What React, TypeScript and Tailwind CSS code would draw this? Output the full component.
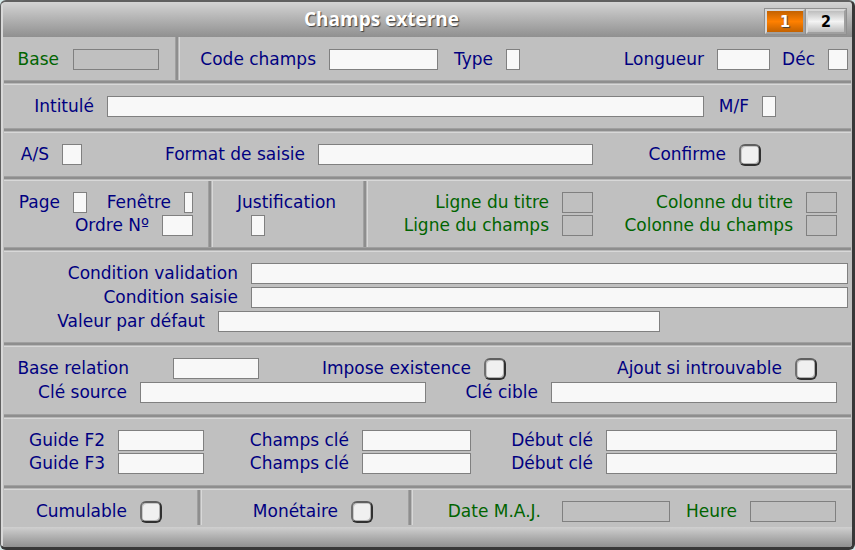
import { useState } from "react";
import type { ReactNode } from "react";
import clsx from "clsx";

type FieldProps = {
  label: string;
  // width of the whole field, label included
  className?: string;
  labelClass?: string;
  inputClass?: string;
  readOnly?: boolean;
};

function Field({ label, className, labelClass, inputClass, readOnly }: FieldProps) {
  return (
    <label
      className={clsx(
        "flex items-center justify-end gap-[13px] whitespace-nowrap",
        readOnly ? "text-[#006400]" : "text-[#000080]",
        className,
      )}
    >
      <span className={clsx("shrink-0 text-right", labelClass)}>{label}</span>
      <input
        type="text"
        readOnly={readOnly}
        className={clsx(
          "h-[21px] min-w-0 border border-[#808080] text-sm outline-none",
          readOnly ? "bg-transparent" : "bg-[#f8f8f8]",
          inputClass,
        )}
      />
    </label>
  );
}

function Check({ label, className }: { label: string; className?: string }) {
  return (
    <label className={clsx("flex h-[21px] items-center justify-end gap-[13px] whitespace-nowrap text-[#000080]", className)}>
      {label}
      <input
        type="checkbox"
        className="size-[22px] shrink-0 appearance-none rounded-md border-2 border-t-[#606060] border-r-[#303030] border-b-[#303030] border-l-[#707070] bg-[#f0f0f0] shadow-[inset_1px_1px_0_#c8c8c8,inset_-1px_-1px_0_#b0b0b0] checked:bg-[#808080]"
      />
    </label>
  );
}

function HLine() {
  return (
    <div className="mx-px">
      <div className="h-px bg-[#a0a0a0]" />
      <div className="h-0.5 bg-[#8e8e8e]" />
      <div className="h-px bg-[#b8b8b8]" />
      <div className="h-px bg-[#d8d8d8]" />
    </div>
  );
}

function VLine({ className = "-my-[11px]" }: { className?: string }) {
  return (
    <div className={clsx("flex shrink-0 self-stretch", className)}>
      <div className="w-px bg-[#a0a0a0]" />
      <div className="w-0.5 bg-[#8e8e8e]" />
      <div className="w-px bg-[#b8b8b8]" />
      <div className="w-px bg-[#d8d8d8]" />
    </div>
  );
}

function Row({ children, className }: { children: ReactNode; className?: string }) {
  return <div className={clsx("flex items-center", className)}>{children}</div>;
}

function Section({ children, className = "py-[11px]" }: { children: ReactNode; className?: string }) {
  return <section className={className}>{children}</section>;
}

export default function App() {
  const [page, setPage] = useState(1);

  return (
    <div className="bg-[#d4e8e8]">
      <form
        className="overflow-hidden rounded-md border-t-2 border-r-3 border-b-3 border-l border-t-[#606060] border-r-[#383838] border-b-[#383838] border-l-[#606060] bg-[#c0c0c0] text-[17px] leading-[21px]"
        style={{ fontFamily: 'Verdana, "DejaVu Sans", sans-serif' }}
      >
        <div className="border-l-2 border-[#d8d8d8]">
          <header className="flex h-[35px] items-center bg-linear-to-b from-[#d4d4d4] to-[#909090] pr-[5px]">
            <h1
              className="flex-1 pr-1 text-center text-[19px] font-bold text-white [text-shadow:1px_1px_1px_#404040]"
              style={{ fontFamily: 'Tahoma, "Open Sans", sans-serif' }}
            >
              Champs externe
            </h1>
            <nav className="mt-1.5 flex gap-px self-start border border-[#909090] bg-[#909090]">
              {[1, 2].map((n) => (
                <button
                  key={n}
                  type="button"
                  onClick={() => setPage(n)}
                  className={clsx(
                    "flex h-[25px] w-10 items-center justify-center border-2 border-t-[#d8d8d8] border-r-[#a0a0a0] border-b-[#a0a0a0] border-l-[#d8d8d8] bg-origin-border text-base font-bold",
                    page === n
                      ? "bg-linear-to-b from-[#b85c00] via-[#ff8000] to-[#b85c00] text-white [text-shadow:1px_1px_1px_#404040]"
                      : "bg-linear-to-b from-[#b4b4b4] via-[#f4f4f4] to-[#b4b4b4] text-black",
                  )}
                  style={{ fontFamily: 'Tahoma, "DejaVu Sans Condensed", sans-serif' }}
                >
                  {n}
                </button>
              ))}
            </nav>
          </header>

          <Section className="pt-3 pb-2.5">
            <Row className="pr-1">
              <Field label="Base" className="w-[156px]" labelClass="mr-px" inputClass="w-[86px]" readOnly />
              <div className="w-4" />
              <VLine className="-mt-3 -mb-2.5" />
              <Field label="Code champs" className="w-[258px]" inputClass="w-[109px]" />
              <Field label="Type" className="w-[82px]" inputClass="w-[14px]" />
              <Field label="Longueur" className="ml-auto" inputClass="w-[53px]" />
              <Field label="Déc" className="w-[78px]" inputClass="w-5" />
            </Row>
          </Section>
          <HLine />

          <Section>
            <Row className="pr-[76px]">
              <Field label="Intitulé" className="flex-1" labelClass="w-[91px]" inputClass="flex-1" />
              <Field label="M/F" className="w-[72px]" inputClass="w-[14px]" />
            </Row>
          </Section>
          <HLine />

          <Section>
            <Row className="pr-[91px]">
              <Field label="A/S" className="w-[79px]" inputClass="w-5" />
              <Field label="Format de saisie" className="w-[511px]" inputClass="w-[275px]" />
              <Check label="Confirme" className="ml-auto" />
            </Row>
          </Section>
          <HLine />

          <Section>
            <Row className="pr-[15px]">
              <div className="flex w-[190px] flex-col gap-0.5">
                <Row>
                  <Field label="Page" className="w-[84px]" inputClass="w-[14px]" />
                  <Field label="Fenêtre" className="ml-auto" inputClass="w-[9px]" />
                </Row>
                <Field label="Ordre Nº" inputClass="w-[31px]" />
              </div>
              <div className="w-[15px]" />
              <VLine />
              <label className="ml-6 flex w-[126px] flex-col gap-0.5 text-[#000080]">
                Justification
                <input
                  type="text"
                  className="ml-[14px] h-[21px] w-[14px] border border-[#808080] bg-[#f8f8f8] outline-none"
                />
              </label>
              <VLine />
              <div className="flex w-[225px] flex-col gap-0.5">
                <Field label="Ligne du titre" inputClass="w-[31px]" readOnly />
                <Field label="Ligne du champs" inputClass="w-[31px]" readOnly />
              </div>
              <div className="ml-auto flex flex-col gap-0.5">
                <Field label="Colonne du titre" inputClass="w-[31px]" readOnly />
                <Field label="Colonne du champs" inputClass="w-[31px]" readOnly />
              </div>
            </Row>
          </Section>
          <HLine />

          <Section className="flex flex-col gap-[3px] pt-[11px] pb-2.5">
            <Row className="pr-1">
              <Field label="Condition validation" className="flex-1" labelClass="w-[235px]" inputClass="flex-1" />
            </Row>
            <Row className="pr-1">
              <Field label="Condition saisie" className="flex-1" labelClass="w-[235px]" inputClass="flex-1" />
            </Row>
            <Row className="pr-1">
              <Field label="Valeur par défaut" className="w-[657px]" inputClass="w-[442px]" />
            </Row>
          </Section>
          <HLine />

          <Section className="flex flex-col gap-[3px] py-[11px]">
            <Row className="pr-[35px]">
              <label htmlFor="base-relation" className="w-[126px] text-right text-[#000080]">
                Base relation
              </label>
              <input
                id="base-relation"
                type="text"
                className="ml-11 h-[21px] w-[86px] border border-[#808080] bg-[#f8f8f8] text-sm outline-none"
              />
              <Check label="Impose existence" className="w-[247px]" />
              <Check label="Ajout si introuvable" className="ml-auto" />
            </Row>
            <Row className="pr-[15px]">
              <Field label="Clé source" className="w-[423px]" inputClass="w-[286px]" />
              <Field label="Clé cible" className="flex-1" labelClass="w-[112px]" inputClass="flex-1" />
            </Row>
          </Section>
          <HLine />

          <Section className="flex flex-col gap-0.5 py-[11px]">
            {["F2", "F3"].map((key) => (
              <Row key={key} className="pr-[15px]">
                <Field label={`Guide ${key}`} className="w-[201px]" inputClass="w-[86px]" />
                <Field label="Champs clé" className="w-[267px]" inputClass="w-[109px]" />
                <Field label="Début clé" className="flex-1" labelClass="w-[122px]" inputClass="flex-1" />
              </Row>
            ))}
          </Section>
          <HLine />

          <Section className="pt-[11px] pb-[5px]">
            <Row className="pr-4">
              <Check label="Cumulable" className="w-[159px]" />
              <div className="w-[35px]" />
              <VLine className="-mt-[11px] -mb-[3px]" />
              <Check label="Monétaire" className="w-[171px]" />
              <div className="w-[35px]" />
              <VLine className="-mt-[11px] -mb-[3px]" />
              <Field label="Date M.A.J." className="w-[257px]" labelClass="mr-2" inputClass="w-[108px]" readOnly />
              <Field label="Heure" className="ml-auto" inputClass="w-[86px]" readOnly />
            </Row>
          </Section>

          <footer className="h-5 bg-linear-to-b from-[#d0d0d0] to-[#909090]" />
        </div>
      </form>
    </div>
  );
}
